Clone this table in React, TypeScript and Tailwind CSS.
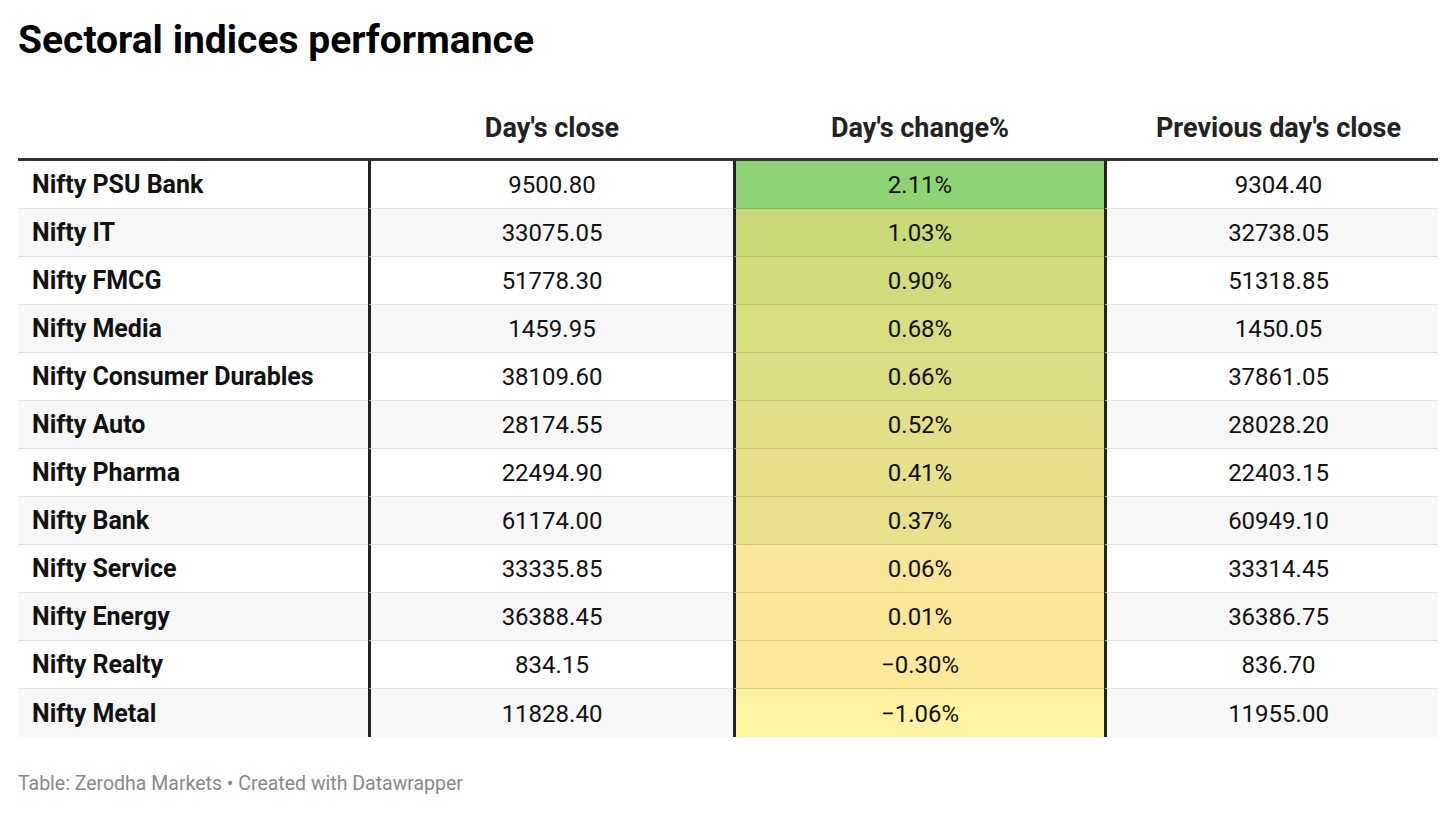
import React from "react";

const rows: [string, string, string, string, string][] = [
  ["Nifty PSU Bank", "9500.80", "2.11%", "9304.40", "#8ed475"],
  ["Nifty IT", "33075.05", "1.03%", "32738.05", "#c9da79"],
  ["Nifty FMCG", "51778.30", "0.90%", "51318.85", "#d0dc7d"],
  ["Nifty Media", "1459.95", "0.68%", "1450.05", "#d9dd82"],
  ["Nifty Consumer Durables", "38109.60", "0.66%", "37861.05", "#dbdd84"],
  ["Nifty Auto", "28174.55", "0.52%", "28028.20", "#e2df88"],
  ["Nifty Pharma", "22494.90", "0.41%", "22403.15", "#e6e08b"],
  ["Nifty Bank", "61174.00", "0.37%", "60949.10", "#e8e08c"],
  ["Nifty Service", "33335.85", "0.06%", "33314.45", "#fce49a"],
  ["Nifty Energy", "36388.45", "0.01%", "36386.75", "#fde59a"],
  ["Nifty Realty", "834.15", "\u22120.30%", "836.70", "#fee89b"],
  ["Nifty Metal", "11828.40", "\u22121.06%", "11955.00", "#fff2a0"],
];

export default function App() {
  return (
    <div
      className="w-[1456px] h-[813px] bg-white pl-[18px] text-[#111]"
      style={{ fontFamily: "Roboto, 'Liberation Sans', sans-serif" }}
    >
      <div className="pt-[17px] h-[72px]">
        <h1 className="text-[39px] leading-[46px] font-bold text-black">Sectoral indices performance</h1>
      </div>
      <div className="w-[1420px]">
        <div className="grid grid-cols-[350px_365px_371px_334px] h-[89px] border-b-[3px] border-[#333] text-[27px] font-bold text-[#222] leading-[32px]">
          <div></div>
          <div className="flex items-end justify-center pb-[14px] pl-[3px]">Day's close</div>
          <div className="flex items-end justify-center pb-[14px] pl-[3px]">Day's change%</div>
          <div className="flex items-end justify-center pb-[14px] pl-[15px]">Previous day's close</div>
        </div>
        {rows.map((r, i) => {
          const bg = i % 2 === 0 ? "bg-white" : "bg-[#f7f7f7]";
          const last = i === rows.length - 1;
          const bb = last ? "" : "border-b border-b-[rgba(0,0,0,0.1)]";
          return (
            <div key={r[0]} className={`grid grid-cols-[350px_365px_371px_334px] h-[48px] text-[24px] leading-[28px] ${bg}`}>
              <div className={`flex items-center pl-[14px] pt-[1px] font-bold text-[25px] ${bb}`}>{r[0]}</div>
              <div className={`flex items-center justify-center pt-[1px] border-l-[3px] border-l-[#222] ${bb}`}>{r[1]}</div>
              <div
                className={`flex items-center justify-center pt-[1px] border-l-[3px] border-l-[#222] ${bb}`}
                style={{ backgroundColor: r[4] }}
              >
                {r[2]}
              </div>
              <div className={`flex items-center justify-center pt-[1px] border-l-[3px] border-l-[#222] pl-[12px] ${bb}`}>{r[3]}</div>
            </div>
          );
        })}
      </div>
      <div className="mt-[35px] text-[19.5px] leading-[23px] text-[#888]">
        Table: Zerodha Markets • Created with Datawrapper
      </div>
    </div>
  );
}
